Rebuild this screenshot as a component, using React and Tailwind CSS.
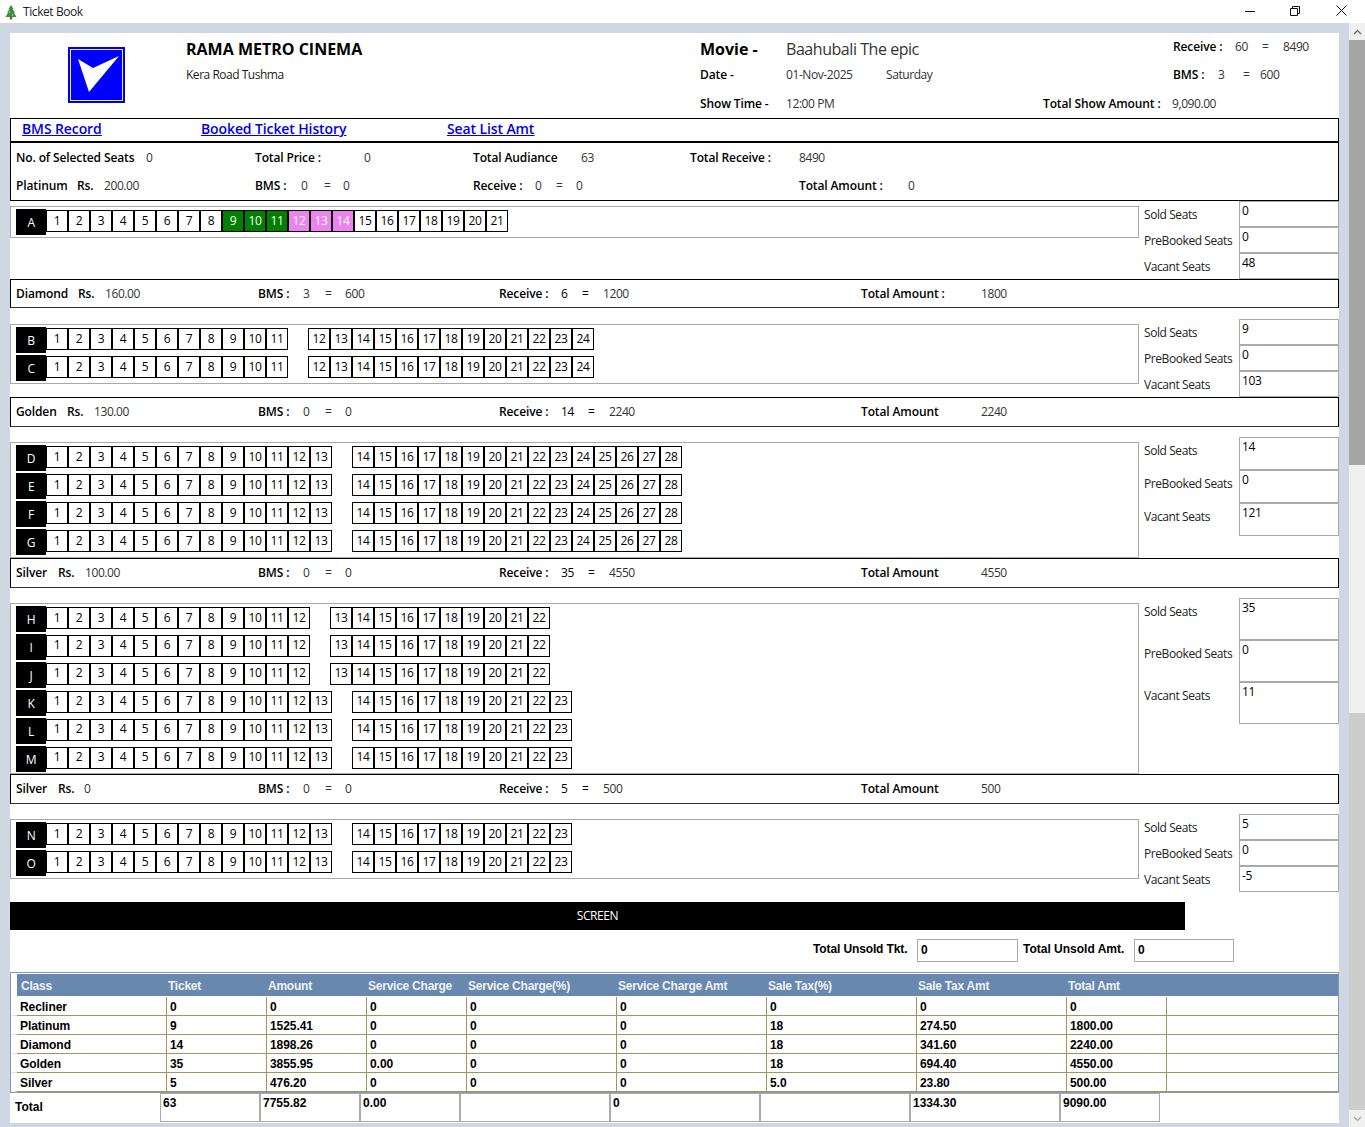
import React from "react";
import clsx from "clsx";

const T = ({ w, b, className, children }) => (
  <span className={clsx("shrink-0 whitespace-nowrap", w, b && "font-semibold tracking-[-0.01em]", className)}>{children}</span>
);

const pink = [12, 13, 14];
const green = [9, 10, 11];

const Seat = ({ n, colored, up }) => (
  <div
    className={clsx(
      "w-[22px] h-[22px] shrink-0 border border-black flex items-center justify-center text-[12px] leading-none",
      up ? "pb-[3px]" : "pb-px",
      colored && green.includes(n) && "bg-[#008000] text-white",
      colored && pink.includes(n) && "bg-[#ee82ee] text-white"
    )}
  >
    {n}
  </div>
);

const range = (a, b) => Array.from({ length: b - a + 1 }, (_, i) => a + i);

const SeatRow = ({ label, split, end, colored, up }) => (
  <div className="flex h-[26px] mb-[2px]">
    <div className="w-[30px] h-[26px] shrink-0 bg-black text-white flex items-center justify-center pt-px text-[12px] leading-none">
      {label}
    </div>
    <div className="flex pt-px">
      {range(1, split).map((n) => (
        <Seat key={n} n={n} colored={colored} up={up} />
      ))}
      {split < end && <div className="w-[20px] shrink-0" />}
      {split < end && range(split + 1, end).map((n) => <Seat key={n} n={n} up={up} />)}
    </div>
  </div>
);

const Stats = ({ values, rowClass }) => (
  <div className="w-[200px] shrink-0">
    {["Sold Seats", "PreBooked Seats", "Vacant Seats"].map((l, i) => (
      <div key={l} className={clsx("flex", rowClass)}>
        <div className="w-[100px] shrink-0 pl-[5px] pt-[6px] text-[#222] leading-4">{l}</div>
        <div className="w-[100px] shrink-0 border border-[#aaaaaa] pl-[2px] pt-[1px] leading-4 bg-white">{values[i]}</div>
      </div>
    ))}
  </div>
);

const Section = ({ height, statsTop, panelClass, rows, values, rowClass }) => (
  <div className={clsx("flex", height)}>
    <div className={clsx("w-[1129px] shrink-0", statsTop)}>
      <div className={clsx("mt-[5px] border border-[#aaaaaa] pl-[5px] pt-[2px]", panelClass)}>
        {rows.map((r) => (
          <SeatRow key={r.label} {...r} />
        ))}
      </div>
    </div>
    <div className={statsTop}>
      <Stats values={values} rowClass={rowClass} />
    </div>
  </div>
);

const Bar = ({ h = "h-[30px] pb-[1px]", first, rs, rsVal, bmsV, bmsT, rec, recEq, recT, recTw = "w-[258px]", amtLabel, amt }) => (
  <div className={clsx("flex items-center border border-black pl-[5px] border-b-[#333]", h)}>
    <T w={first} b>{rs[0]}</T>
    <T w={rs[1]} b>Rs.</T>
    <T w={rs[2]} className="text-[#333]">{rsVal}</T>
    <T w="w-[45px]" b>BMS :</T>
    <T w="w-[22px]" className="text-[#333]">{bmsV}</T>
    <T w="w-[20px]" className="text-[#333]">=</T>
    <T w="w-[154px]" className="text-[#333]">{bmsT}</T>
    <T w="w-[62px]" b>Receive :</T>
    <T w={recEq}>{rec}</T>
    <T w="w-[21px]">=</T>
    <T w={recTw} className="text-[#333]">{recT}</T>
    <T w="w-[120px]" b>{amtLabel}</T>
    <T className="text-[#333]">{amt}</T>
  </div>
);

const cols = ["w-[150px]", "w-[100px]", "w-[100px]", "w-[100px]", "w-[150px]", "w-[150px]", "w-[150px]", "w-[150px]", "w-[100px]"];
const heads = ["Class", "Ticket", "Amount", "Service Charge", "Service Charge(%)", "Service Charge Amt", "Sale Tax(%)", "Sale Tax Amt", "Total Amt"];
const tableRows = [
  ["Recliner", "0", "0", "0", "0", "0", "0", "0", "0", ""],
  ["Platinum", "9", "1525.41", "0", "0", "0", "18", "274.50", "1800.00", ""],
  ["Diamond", "14", "1898.26", "0", "0", "0", "18", "341.60", "2240.00", ""],
  ["Golden", "35", "3855.95", "0.00", "0", "0", "18", "694.40", "4550.00", ""],
  ["Silver", "5", "476.20", "0", "0", "0", "5.0", "23.80", "500.00", ""],
];
const totals = [
  ["w-[100px]", "63"],
  ["w-[100px]", "7755.82"],
  ["w-[100px]", "0.00"],
  ["w-[150px]", ""],
  ["w-[150px]", "0"],
  ["w-[150px]", ""],
  ["w-[150px]", "1334.30"],
  ["w-[100px]", "9090.00"],
];

const tableFont = "[font-family:'Liberation_Sans',Arial,sans-serif] font-bold text-[12px]";

export default function App() {
  return (
    <div className="w-[1365px] h-[1127px] overflow-hidden bg-[#cfd7e3] text-[12px] text-black [font-family:'Open_Sans','Noto_Sans',sans-serif] tracking-[-0.035em] flex flex-col">
      {/* Title bar */}
      <div className="h-[23px] shrink-0 bg-white flex items-center">
        <svg className="ml-[4px] mr-[5px]" width="14" height="16" viewBox="0 0 14 16">
          <path d="M7 1 L9.5 5 H8.5 L11 8.5 H9.8 L12.5 13 H1.5 L4.2 8.5 H3 L5.5 5 H4.5 Z" fill="#3d8b3d" />
          <rect x="5.8" y="13" width="2.4" height="2.5" fill="#7a5a30" />
          <circle cx="5.5" cy="8" r=".7" fill="#cfe6c0" />
          <circle cx="8.5" cy="11" r=".7" fill="#cfe6c0" />
        </svg>
        <span className="text-[#222]">Ticket Book</span>
        <div className="ml-auto flex items-center mb-[2px]">
          <svg width="10" height="10" viewBox="0 0 10 10" className="mr-[35px]">
            <path d="M0 5.5 H10" stroke="#111" strokeWidth="1" />
          </svg>
          <svg width="10" height="10" viewBox="0 0 10 10" className="mr-[36px]">
            <path d="M0.5 2.5 H7.5 V9.5 H0.5 Z M2.5 2.5 V0.5 H9.5 V7.5 H7.5" stroke="#111" strokeWidth="1" fill="none" />
          </svg>
          <svg width="11" height="11" viewBox="0 0 11 11" className="mr-[18px]">
            <path d="M0.5 0.5 L10.5 10.5 M10.5 0.5 L0.5 10.5" stroke="#111" strokeWidth="1" />
          </svg>
        </div>
      </div>

      <div className="flex flex-1 pl-[10px]">
        <div className="w-[1329px] shrink-0 mt-[10px] h-[1090px] bg-white flex flex-col">
          {/* Header */}
          <div className="h-[85px] shrink-0 flex">
            <div className="w-[176px] shrink-0 pl-[58px] pt-[14px]">
              <svg width="57" height="56" viewBox="0 0 57 56">
                <rect width="57" height="56" fill="#0000e6" />
                <rect x="2.5" y="2.5" width="52" height="51" fill="#0000ff" stroke="#e8e8ff" strokeWidth="1" />
                <polygon points="10,12 25,21 51,9 21,45" fill="#fff" />
              </svg>
            </div>
            <div className="w-[514px] shrink-0 pt-[7px]">
              <div className="text-[16px] font-bold leading-[18px] h-[27px] tracking-normal">RAMA METRO CINEMA</div>
              <div className="leading-4 text-[#222] tracking-[-0.04em]">Kera Road Tushma</div>
            </div>
            <div className="w-[343px] shrink-0 pt-[7px]">
              <div className="flex items-center h-[18px] mb-[9px]">
                <span className="w-[86px] shrink-0 text-[16px] font-bold tracking-normal whitespace-nowrap">Movie -</span>
                <span className="text-[16px] text-[#333] tracking-[-0.028em] whitespace-nowrap">Baahubali The epic</span>
              </div>
              <div className="flex items-center h-[16px] mb-[13px] text-[#333]">
                <T w="w-[86px]" b className="text-black">Date -</T>
                <T w="w-[100px]">01-Nov-2025</T>
                <T>Saturday</T>
              </div>
              <div className="flex items-center h-[16px] text-[#333]">
                <T w="w-[86px]" b className="text-black">Show Time -</T>
                <T>12:00 PM</T>
              </div>
            </div>
            <div className="flex-1 flex flex-col">
              <div className="h-[56px] pl-[130px] pt-[6px]">
                <div className="flex items-center h-[16px] mb-[12px] text-[#333]">
                  <T w="w-[62px]" b className="text-black">Receive :</T>
                  <T w="w-[27px]">60</T>
                  <T w="w-[21px]">=</T>
                  <T>8490</T>
                </div>
                <div className="flex items-center h-[16px] text-[#333]">
                  <T w="w-[45px]" b className="text-black">BMS :</T>
                  <T w="w-[25px]">3</T>
                  <T w="w-[17px]">=</T>
                  <T>600</T>
                </div>
              </div>
              <div className="flex items-center h-[16px] mt-[7px] text-[#333]">
                <T w="w-[129px]" b className="text-black">Total Show Amount :</T>
                <T>9,090.00</T>
              </div>
            </div>
          </div>

          {/* Links */}
          <div className="h-[25px] shrink-0 border border-black border-b-2 flex items-center pl-[11px] text-[14px] font-semibold text-[#0000ee] underline pb-[3px] tracking-[-0.008em]">
            <a className="w-[179px] shrink-0">BMS Record</a>
            <a className="w-[246px] shrink-0">Booked Ticket History</a>
            <a className="shrink-0">Seat List Amt</a>
          </div>

          {/* Info */}
          <div className="h-[58px] shrink-0 border border-black border-t-0 pl-[5px] pt-[7px]">
            <div className="flex items-center h-[16px] mb-[12px]">
              <T w="w-[130px]" b>No. of Selected Seats</T>
              <T w="w-[109px]" className="text-[#333]">0</T>
              <T w="w-[109px]" b>Total Price :</T>
              <T w="w-[109px]" className="text-[#333]">0</T>
              <T w="w-[108px]" b>Total Audiance</T>
              <T w="w-[109px]" className="text-[#333]">63</T>
              <T w="w-[109px]" b>Total Receive :</T>
              <T className="text-[#333]">8490</T>
            </div>
            <div className="flex items-center h-[16px]">
              <T w="w-[61px]" b>Platinum</T>
              <T w="w-[27px]" b>Rs.</T>
              <T w="w-[151px]" className="text-[#333]">200.00</T>
              <T w="w-[46px]" b>BMS :</T>
              <T w="w-[23px]" className="text-[#333]">0</T>
              <T w="w-[19px]" className="text-[#333]">=</T>
              <T w="w-[130px]" className="text-[#333]">0</T>
              <T w="w-[62px]" b>Receive :</T>
              <T w="w-[21px]" className="text-[#333]">0</T>
              <T w="w-[20px]" className="text-[#333]">=</T>
              <T w="w-[223px]" className="text-[#333]">0</T>
              <T w="w-[109px]" b>Total Amount :</T>
              <T className="text-[#333]">0</T>
            </div>
          </div>

          <Section
            height="h-[78px]"
            statsTop="mt-0"
            panelClass="h-[32px]"
            rows={[{ label: "A", split: 21, end: 21, colored: true }]}
            values={["0", "0", "48"]}
            rowClass="h-[26px]"
          />
          <Bar h="h-[29px]" first="w-[62px]" rs={["Diamond", "w-[27px]", "w-[153px]"]} rsVal="160.00" bmsV="3" bmsT="600" rec="6" recEq="w-[21px]" recT="1200" amtLabel="Total Amount :" amt="1800" />
          <Section
            height="h-[89px]"
            statsTop="mt-[11px]"
            panelClass="h-[60px]"
            rows={[
              { label: "B", split: 11, end: 24 },
              { label: "C", split: 11, end: 24 },
            ]}
            values={["9", "0", "103"]}
            rowClass="h-[26px]"
          />
          <Bar first="w-[51px]" rs={["Golden", "w-[27px]", "w-[164px]"]} rsVal="130.00" bmsV="0" bmsT="0" rec="14" recEq="w-[27px]" recT="2240" recTw="w-[252px]" amtLabel="Total Amount" amt="2240" />
          <Section
            height="h-[131px]"
            statsTop="mt-[10px]"
            panelClass="h-[116px]"
            rows={["D", "E", "F", "G"].map((label) => ({ label, split: 13, end: 28 }))}
            values={["14", "0", "121"]}
            rowClass="h-[33px]"
          />
          <Bar first="w-[42px]" rs={["Silver", "w-[27px]", "w-[173px]"]} rsVal="100.00" bmsV="0" bmsT="0" rec="35" recEq="w-[27px]" recT="4550" recTw="w-[252px]" amtLabel="Total Amount" amt="4550" />
          <Section
            height="h-[186px]"
            statsTop="mt-[10px]"
            panelClass="h-[171px]"
            rows={[
              { label: "H", split: 12, end: 22 },
              { label: "I", split: 12, end: 22, up: true },
              { label: "J", split: 12, end: 22, up: true },
              { label: "K", split: 13, end: 23, up: true },
              { label: "L", split: 13, end: 23, up: true },
              { label: "M", split: 13, end: 23, up: true },
            ]}
            values={["35", "0", "11"]}
            rowClass="h-[42px]"
          />
          <Bar first="w-[42px]" rs={["Silver", "w-[26px]", "w-[174px]"]} rsVal="0" bmsV="0" bmsT="0" rec="5" recEq="w-[21px]" recT="500" amtLabel="Total Amount" amt="500" />
          <Section
            height="h-[98px]"
            statsTop="mt-[10px]"
            panelClass="h-[60px]"
            rows={[
              { label: "N", split: 13, end: 23 },
              { label: "O", split: 13, end: 23 },
            ]}
            values={["5", "0", "-5"]}
            rowClass="h-[26px]"
          />

          {/* Screen */}
          <div className="h-[28px] w-[1175px] shrink-0 bg-black text-white flex items-center justify-center">SCREEN</div>

          {/* Unsold */}
          <div className={clsx("h-[42px] shrink-0 flex items-start pt-[9px] pl-[803px] tracking-[-0.01em]", tableFont)}>
            <span className="w-[104px] shrink-0 pt-[1px] whitespace-nowrap">Total Unsold Tkt.</span>
            <div className="w-[101px] h-[23px] shrink-0 border border-[#aaaaaa] pl-[3px] pt-[1px]">0</div>
            <span className="w-[116px] shrink-0 pl-[5px] pt-[1px] whitespace-nowrap tracking-normal">Total Unsold Amt.</span>
            <div className="w-[100px] h-[23px] shrink-0 border border-[#aaaaaa] pl-[3px] pt-[1px]">0</div>
          </div>

          {/* Table */}
          <div className={clsx("h-[121px] shrink-0 border border-[#7f9bb8] pt-px tracking-normal", tableFont)}>
            <div className="flex h-[22px] mb-px">
              <div className="w-[6px] shrink-0" />
              <div className="flex flex-1 bg-[#6888ad] text-[#eef2f7] items-center pt-[2px] tracking-[-0.02em]">
                {heads.map((h, i) => (
                  <div key={h} className={clsx("shrink-0 whitespace-nowrap", cols[i], i === 0 ? "pl-[4px]" : "pl-[1px]")}>
                    {h}
                  </div>
                ))}
              </div>
            </div>
            {tableRows.map((r) => (
              <div key={r[0]} className="flex h-[19px]">
                <div className="w-[6px] shrink-0 border-b border-[#e4e4e4]" />
                <div className="flex flex-1 border-b border-[#a3955f]">
                  {cols.map((c, i) => (
                    <div key={i} className={clsx("shrink-0 border-r border-[#a3955f] pl-[3px] leading-[20px] tracking-[-0.005em]", c)}>
                      {r[i]}
                    </div>
                  ))}
                </div>
              </div>
            ))}
          </div>

          {/* Totals */}
          <div className={clsx("h-[29px] shrink-0 flex tracking-normal", tableFont)}>
            <div className="w-[150px] shrink-0 pl-[5px] pt-[5px]">Total</div>
            {totals.map(([w, v], i) => (
              <div key={i} className={clsx("shrink-0 border border-[#aaaaaa] pl-[2px] pt-px leading-[16px]", w)}>
                {v}
              </div>
            ))}
          </div>
        </div>

        <div className="w-[10px] shrink-0" />

        {/* Scrollbar */}
        <div className="w-[16px] shrink-0 flex flex-col bg-[#f0f0f0]">
          <div className="h-[17px] shrink-0 flex items-center justify-center">
            <svg width="9" height="6" viewBox="0 0 9 6">
              <path d="M1 5 L4.5 1.5 L8 5" stroke="#606060" strokeWidth="1.2" fill="none" />
            </svg>
          </div>
          <div className="h-[425px] shrink-0 bg-[#a6a6a6]" />
          <div className="h-[248px] shrink-0" />
          <div className="h-[397px] shrink-0 bg-[#cdcdcd]" />
          <div className="flex-1 flex items-center justify-center">
            <svg width="9" height="6" viewBox="0 0 9 6">
              <path d="M1 1 L4.5 4.5 L8 1" stroke="#a0a0a0" strokeWidth="1.2" fill="none" />
            </svg>
          </div>
        </div>
      </div>
    </div>
  );
}
